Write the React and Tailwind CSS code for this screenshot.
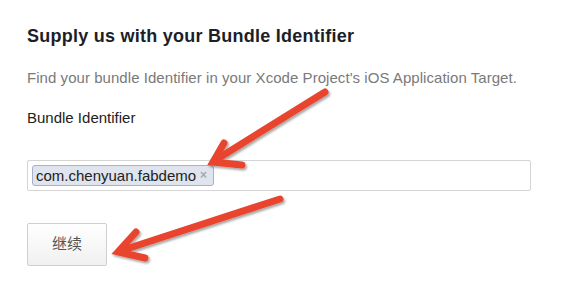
import React from "react";

export default function App() {
  const font = { fontFamily: '"Liberation Sans", Arial, "Noto Sans CJK SC", sans-serif' };
  return (
    <div className="relative w-[574px] h-[284px] bg-white overflow-hidden" style={font}>
      <div className="pl-[27px] pt-[26px] flex flex-col items-start">
        <h1 className="text-[18px] leading-[20px] font-bold tracking-[0.25px] text-[#1c1e28]">
          Supply us with your Bundle Identifier
        </h1>
        <p className="mt-[22px] text-[15px] leading-[20px] tracking-[0.05px] text-[#7a7a7a]">
          Find your bundle Identifier in your Xcode Project's iOS Application Target.
        </p>
        <div className="mt-[20px] text-[15px] leading-[20px] text-[#222]">Bundle Identifier</div>
        <div className="mt-[32px] w-[504px] h-[31px] border border-[#d4d4d4] rounded-[2px] flex items-center pl-[4px]">
          <div className="h-[21px] flex items-center pl-[3px] pr-[6px] bg-[#dfe4ee] border border-[#a6b1cc] rounded-[3px]">
            <span className="text-[15px] leading-[19px] text-[#222]">com.chenyuan.fabdemo</span>
            <span className="ml-[4px] text-[12px] leading-[19px] text-[#a8a8a8] font-bold">×</span>
          </div>
        </div>
        <button className="mt-[32px] w-[80px] h-[43px] border border-[#cfcfcf] rounded-[2px] bg-gradient-to-b from-white to-[#f0f0f0] text-[15px] text-[#555]">
          继续
        </button>
      </div>
      <svg className="absolute left-0 top-0 pointer-events-none" width="574" height="284" viewBox="0 0 574 284">
        <defs>
          <filter id="sh" x="-20%" y="-20%" width="140%" height="140%">
            <feDropShadow dx="1.5" dy="2" stdDeviation="1.2" floodColor="#000" floodOpacity="0.35" />
          </filter>
        </defs>
        <g fill="none" stroke="#e9452f" strokeWidth="7" strokeLinecap="round" strokeLinejoin="miter" filter="url(#sh)">
          <path d="M325 92 L214 161" />
          <path d="M224 143 L213 162 L242 165" />
          <path d="M280 199 L120 251" />
          <path d="M136 232 L118 252 L145 258" />
        </g>
      </svg>
    </div>
  );
}
